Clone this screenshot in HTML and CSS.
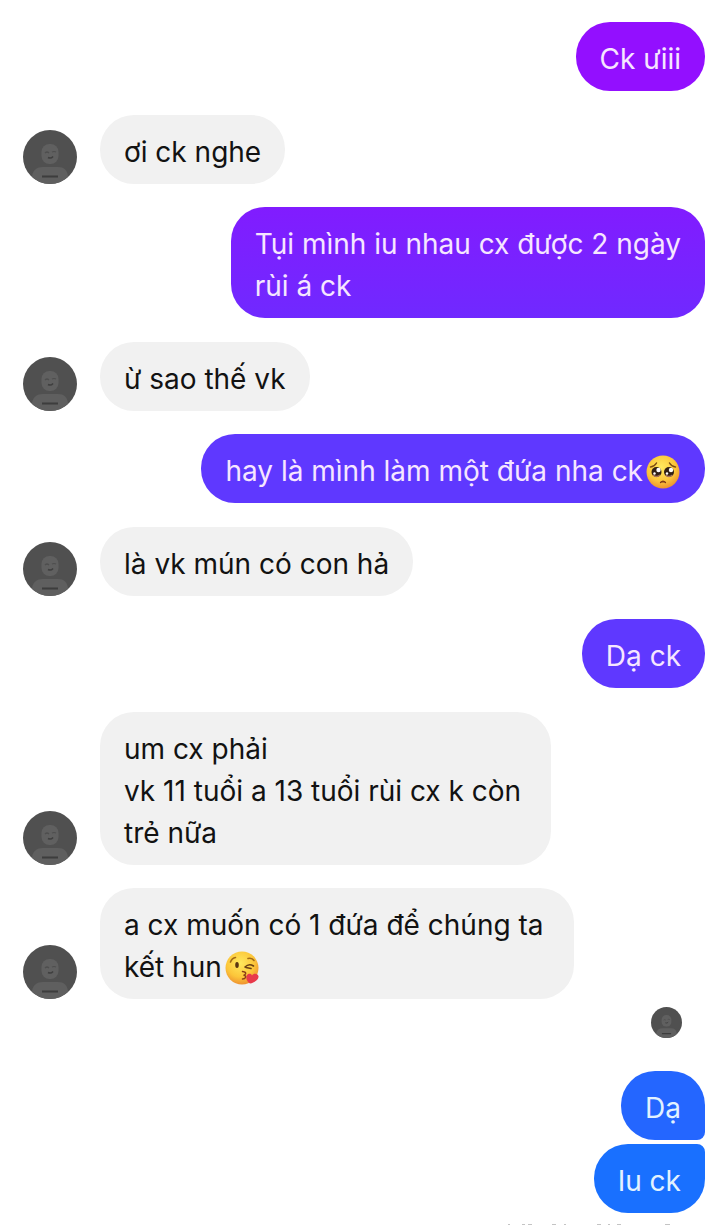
FILE: index.html
```html
<!DOCTYPE html>
<html lang="vi">
<head>
<meta charset="utf-8">
<meta name="viewport" content="width=device-width, initial-scale=1">
<title>Chat</title>
<link rel="stylesheet" href="styles.css">
</head>
<body>
<svg class="defs" aria-hidden="true">
  <defs>
    <clipPath id="round"><circle cx="27" cy="27" r="27"/></clipPath>
    <symbol id="avatar" viewBox="0 0 54 54">
      <g clip-path="url(#round)">
        <rect width="54" height="54" fill="#505050"/>
        <path d="M9 54V46c1-6 5-9 11-9h15c6 0 9 3 10 9v8z" fill="#5f5f5f"/>
        <rect x="18.500" y="14" width="17" height="20" rx="8" fill="#606060"/>
        <path d="M22 23q2-2 4 0M29 22q2-1 4 0" fill="none" stroke="#4e4e4e" stroke-width="1.200"/>
        <path d="M25 27.500q3 1.500 5-1" fill="none" stroke="#3f3f3f" stroke-width="1.500"/>
        <path d="M19 46.500h16" stroke="#3d3d3d" stroke-width="2"/>
      </g>
    </symbol>
    <radialGradient id="face" cx=".45" cy=".35" r=".65">
      <stop offset="0" stop-color="#ffe95e"/><stop offset=".65" stop-color="#fcc63a"/><stop offset="1" stop-color="#ee9330"/>
    </radialGradient>
    <symbol id="pleading" viewBox="0 0 34 34">
      <circle cx="17" cy="17" r="16.500" fill="url(#face)"/>
      <path d="M4.500 12q4-.5 6-4M29.500 12q-4-.5-6-4" fill="none" stroke="#7c4b12" stroke-width="1.500" stroke-linecap="round"/>
      <circle cx="10.500" cy="17" r="5" fill="#322015"/><circle cx="23" cy="17" r="5" fill="#322015"/>
      <path d="M7 20q3.500 3 7 0M19.500 20q3.500 3 7 0" fill="none" stroke="#a8735c" stroke-width="1.500"/>
      <circle cx="12.500" cy="15" r="2.200" fill="#fff"/><circle cx="25" cy="15" r="2.200" fill="#fff"/>
      <circle cx="8.500" cy="18.500" r="1.200" fill="#fff"/><circle cx="21" cy="18.500" r="1.200" fill="#fff"/>
      <path d="M14.500 27.500q2.500-3 5 0" fill="#7c3517" stroke="#7c3517" stroke-width="1.200" stroke-linecap="round"/>
    </symbol>
    <symbol id="kiss" viewBox="0 0 34 34">
      <circle cx="17" cy="17" r="16.500" fill="url(#face)"/>
      <path d="M5.500 11q1.500-4 5-4.500M23 7.500q4-1 6 2" fill="none" stroke="#a26a16" stroke-width="1.600" stroke-linecap="round"/>
      <ellipse cx="12" cy="14" rx="1.800" ry="3" fill="#5b3511"/>
      <path d="M20 16q4-4 8.500-1M21 16.500l5 1" fill="none" stroke="#6b4013" stroke-width="1.600" stroke-linecap="round"/>
      <path d="M17.500 20.500q4 .5 3 2.500-.5 1-2 1.200 3 .3 2 2.300-.7 1.500-3 1.500" fill="none" stroke="#8a3d17" stroke-width="1.500" stroke-linecap="round"/>
      <path d="M25 32.500c-3.500-2-4.500-6-3-8.500 1.500-2 4.500-1.500 5 .5 1.500-2.500 6-2.300 6.500.8.500 3.500-4 6.200-8.500 7.200z" fill="#e8394a"/>
    </symbol>
  </defs>
</svg>
<main class="chat">
  <div class="row sent"><p class="bubble violet">Ck ưiii</p></div>
  <div class="row"><svg class="avatar"><use href="#avatar"/></svg><p class="bubble">ơi ck nghe</p></div>
  <div class="row sent"><p class="bubble purple">Tụi mình iu nhau cx được 2 ngày<br>rùi á ck</p></div>
  <div class="row"><svg class="avatar"><use href="#avatar"/></svg><p class="bubble">ừ sao thế vk</p></div>
  <div class="row sent"><p class="bubble indigo">hay là mình làm một đứa nha ck<svg class="emoji" role="img" aria-label="🥺"><use href="#pleading"/></svg></p></div>
  <div class="row"><svg class="avatar"><use href="#avatar"/></svg><p class="bubble">là vk mún có con hả</p></div>
  <div class="row sent"><p class="bubble indigo">Dạ ck</p></div>
  <div class="row"><svg class="avatar"><use href="#avatar"/></svg><p class="bubble multiline">um cx phải<br>vk 11 tuổi a 13 tuổi rùi cx k còn<br>trẻ nữa</p></div>
  <div class="row last"><svg class="avatar"><use href="#avatar"/></svg><p class="bubble multiline">a cx muốn có 1 đứa để chúng ta<br>kết hun<svg class="emoji" role="img" aria-label="😘"><use href="#kiss"/></svg></p></div>
  <div class="seen"><svg class="avatar small"><use href="#avatar"/></svg></div>
  <div class="row sent group"><p class="bubble blue first">Dạ</p></div>
  <div class="row sent group"><p class="bubble azure final">Iu ck</p></div>
  <svg class="edge" viewBox="0 0 180 3" aria-hidden="true"><path d="M3 2.500h2M17 2.500h3M23 2.500h4M47 2.500h4M59 2.500h2M92 2.500h4M103 2.500h2M112 2.500h4M160 2.500h5" stroke="#c4c4c4"/></svg>
</main>
</body>
</html>
```
FILE: styles.css
```css
body {
  margin: 0;
  background: #fff;
  color: #121212;
  font: 28px/42px Inter, "Noto Sans", sans-serif;
}

.defs {
  position: absolute;
  width: 0;
  height: 0;
}

.chat {
  padding: 22px 15px 0 23px;
}

.row {
  display: flex;
  align-items: flex-end;
  gap: 23px;
  margin-bottom: 23px;
}

.sent {
  justify-content: flex-end;
  margin-bottom: 24px;
}

.last {
  margin-bottom: 8px;
}

.group {
  margin-bottom: 4px;
}

.bubble {
  margin: 0;
  padding: 16px 24px 11px;
  border-radius: 34px;
  background: #f1f1f1;
}

.multiline {
  padding-right: 30px;
}

.sent .bubble {
  color: #f6e6ff;
}

.sent .violet {
  background: #930fff;
}

.sent .purple {
  background: linear-gradient(#811cff, #7029ff);
}

.sent .indigo {
  background: #5f38ff;
}

.sent .blue {
  background: #2466ff;
  color: #e2f2ff;
}

.sent .azure {
  background: #1970ff;
  color: #e2f2ff;
}

.first {
  border-bottom-right-radius: 8px;
}

.final {
  border-top-right-radius: 8px;
}

.avatar {
  flex: none;
  display: block;
  width: 54px;
  height: 54px;
}

.small {
  width: 31px;
  height: 31px;
}

.seen {
  display: flex;
  justify-content: flex-end;
  padding-right: 23px;
  margin-bottom: 33px;
}

.emoji {
  width: 34px;
  height: 34px;
  margin: 0 1px 0 3px;
  vertical-align: -8px;
}

.edge {
  display: block;
  width: 180px;
  height: 3px;
  margin: 9px 20px 0 auto;
}
```
